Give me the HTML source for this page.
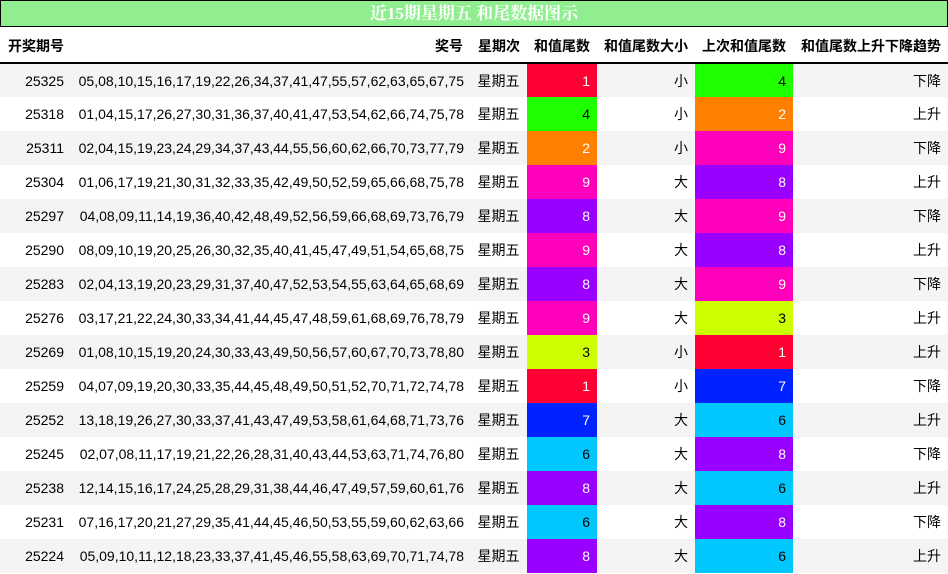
<!DOCTYPE html>
<html><head><meta charset="utf-8"><style>
*{margin:0;padding:0;box-sizing:border-box}
body{width:948px;height:574px;overflow:hidden;background:#fff;font-family:"Liberation Sans","Noto Sans CJK SC",sans-serif;font-size:14px;color:#000}
.title{height:27px;background:#90EE90;border:1px solid #000;color:#fff;font-weight:bold;font-size:17px;text-align:center;line-height:25px;font-family:"Liberation Serif","Noto Serif CJK SC",serif}
table{border-collapse:collapse;table-layout:fixed;width:948px}
th{height:36px;font-weight:bold;font-size:14px;border-bottom:2px solid #000;text-align:right;padding-right:7px;padding-top:3px}
th:first-child{text-align:left;padding-left:8px}
td{height:34px;text-align:right;padding-right:7px;white-space:nowrap}
td:first-child{padding-right:11px}
td:nth-child(2){padding-right:6px}
tr:nth-child(odd) td{background:#f4f4f4}
td.w{text-align:center;padding:0}
.r{background:#FF0033!important;color:#fff}
.g{background:#1EFF00!important}
.o{background:#FF8000!important;color:#fff}
.m{background:#FF00BB!important;color:#fff}
.p{background:#9900FF!important;color:#fff}
.y{background:#CCFF00!important}
.b{background:#0022FF!important;color:#fff}
.c6{background:#00C8FF!important}
</style></head><body>
<div class="title">近15期星期五 和尾数据图示</div>
<table>
<colgroup><col style="width:75px"><col style="width:395px"><col style="width:57px"><col style="width:70px"><col style="width:98px"><col style="width:98px"><col style="width:155px"></colgroup>
<thead><tr><th>开奖期号</th><th>奖号</th><th>星期次</th><th>和值尾数</th><th>和值尾数大小</th><th>上次和值尾数</th><th>和值尾数上升下降趋势</th></tr></thead>
<tbody>
<tr><td>25325</td><td>05,08,10,15,16,17,19,22,26,34,37,41,47,55,57,62,63,65,67,75</td><td class="w">星期五</td><td class="r">1</td><td>小</td><td class="g">4</td><td>下降</td></tr>
<tr><td>25318</td><td>01,04,15,17,26,27,30,31,36,37,40,41,47,53,54,62,66,74,75,78</td><td class="w">星期五</td><td class="g">4</td><td>小</td><td class="o">2</td><td>上升</td></tr>
<tr><td>25311</td><td>02,04,15,19,23,24,29,34,37,43,44,55,56,60,62,66,70,73,77,79</td><td class="w">星期五</td><td class="o">2</td><td>小</td><td class="m">9</td><td>下降</td></tr>
<tr><td>25304</td><td>01,06,17,19,21,30,31,32,33,35,42,49,50,52,59,65,66,68,75,78</td><td class="w">星期五</td><td class="m">9</td><td>大</td><td class="p">8</td><td>上升</td></tr>
<tr><td>25297</td><td>04,08,09,11,14,19,36,40,42,48,49,52,56,59,66,68,69,73,76,79</td><td class="w">星期五</td><td class="p">8</td><td>大</td><td class="m">9</td><td>下降</td></tr>
<tr><td>25290</td><td>08,09,10,19,20,25,26,30,32,35,40,41,45,47,49,51,54,65,68,75</td><td class="w">星期五</td><td class="m">9</td><td>大</td><td class="p">8</td><td>上升</td></tr>
<tr><td>25283</td><td>02,04,13,19,20,23,29,31,37,40,47,52,53,54,55,63,64,65,68,69</td><td class="w">星期五</td><td class="p">8</td><td>大</td><td class="m">9</td><td>下降</td></tr>
<tr><td>25276</td><td>03,17,21,22,24,30,33,34,41,44,45,47,48,59,61,68,69,76,78,79</td><td class="w">星期五</td><td class="m">9</td><td>大</td><td class="y">3</td><td>上升</td></tr>
<tr><td>25269</td><td>01,08,10,15,19,20,24,30,33,43,49,50,56,57,60,67,70,73,78,80</td><td class="w">星期五</td><td class="y">3</td><td>小</td><td class="r">1</td><td>上升</td></tr>
<tr><td>25259</td><td>04,07,09,19,20,30,33,35,44,45,48,49,50,51,52,70,71,72,74,78</td><td class="w">星期五</td><td class="r">1</td><td>小</td><td class="b">7</td><td>下降</td></tr>
<tr><td>25252</td><td>13,18,19,26,27,30,33,37,41,43,47,49,53,58,61,64,68,71,73,76</td><td class="w">星期五</td><td class="b">7</td><td>大</td><td class="c6">6</td><td>上升</td></tr>
<tr><td>25245</td><td>02,07,08,11,17,19,21,22,26,28,31,40,43,44,53,63,71,74,76,80</td><td class="w">星期五</td><td class="c6">6</td><td>大</td><td class="p">8</td><td>下降</td></tr>
<tr><td>25238</td><td>12,14,15,16,17,24,25,28,29,31,38,44,46,47,49,57,59,60,61,76</td><td class="w">星期五</td><td class="p">8</td><td>大</td><td class="c6">6</td><td>上升</td></tr>
<tr><td>25231</td><td>07,16,17,20,21,27,29,35,41,44,45,46,50,53,55,59,60,62,63,66</td><td class="w">星期五</td><td class="c6">6</td><td>大</td><td class="p">8</td><td>下降</td></tr>
<tr><td>25224</td><td>05,09,10,11,12,18,23,33,37,41,45,46,55,58,63,69,70,71,74,78</td><td class="w">星期五</td><td class="p">8</td><td>大</td><td class="c6">6</td><td>上升</td></tr>
</tbody></table>
</body></html>
